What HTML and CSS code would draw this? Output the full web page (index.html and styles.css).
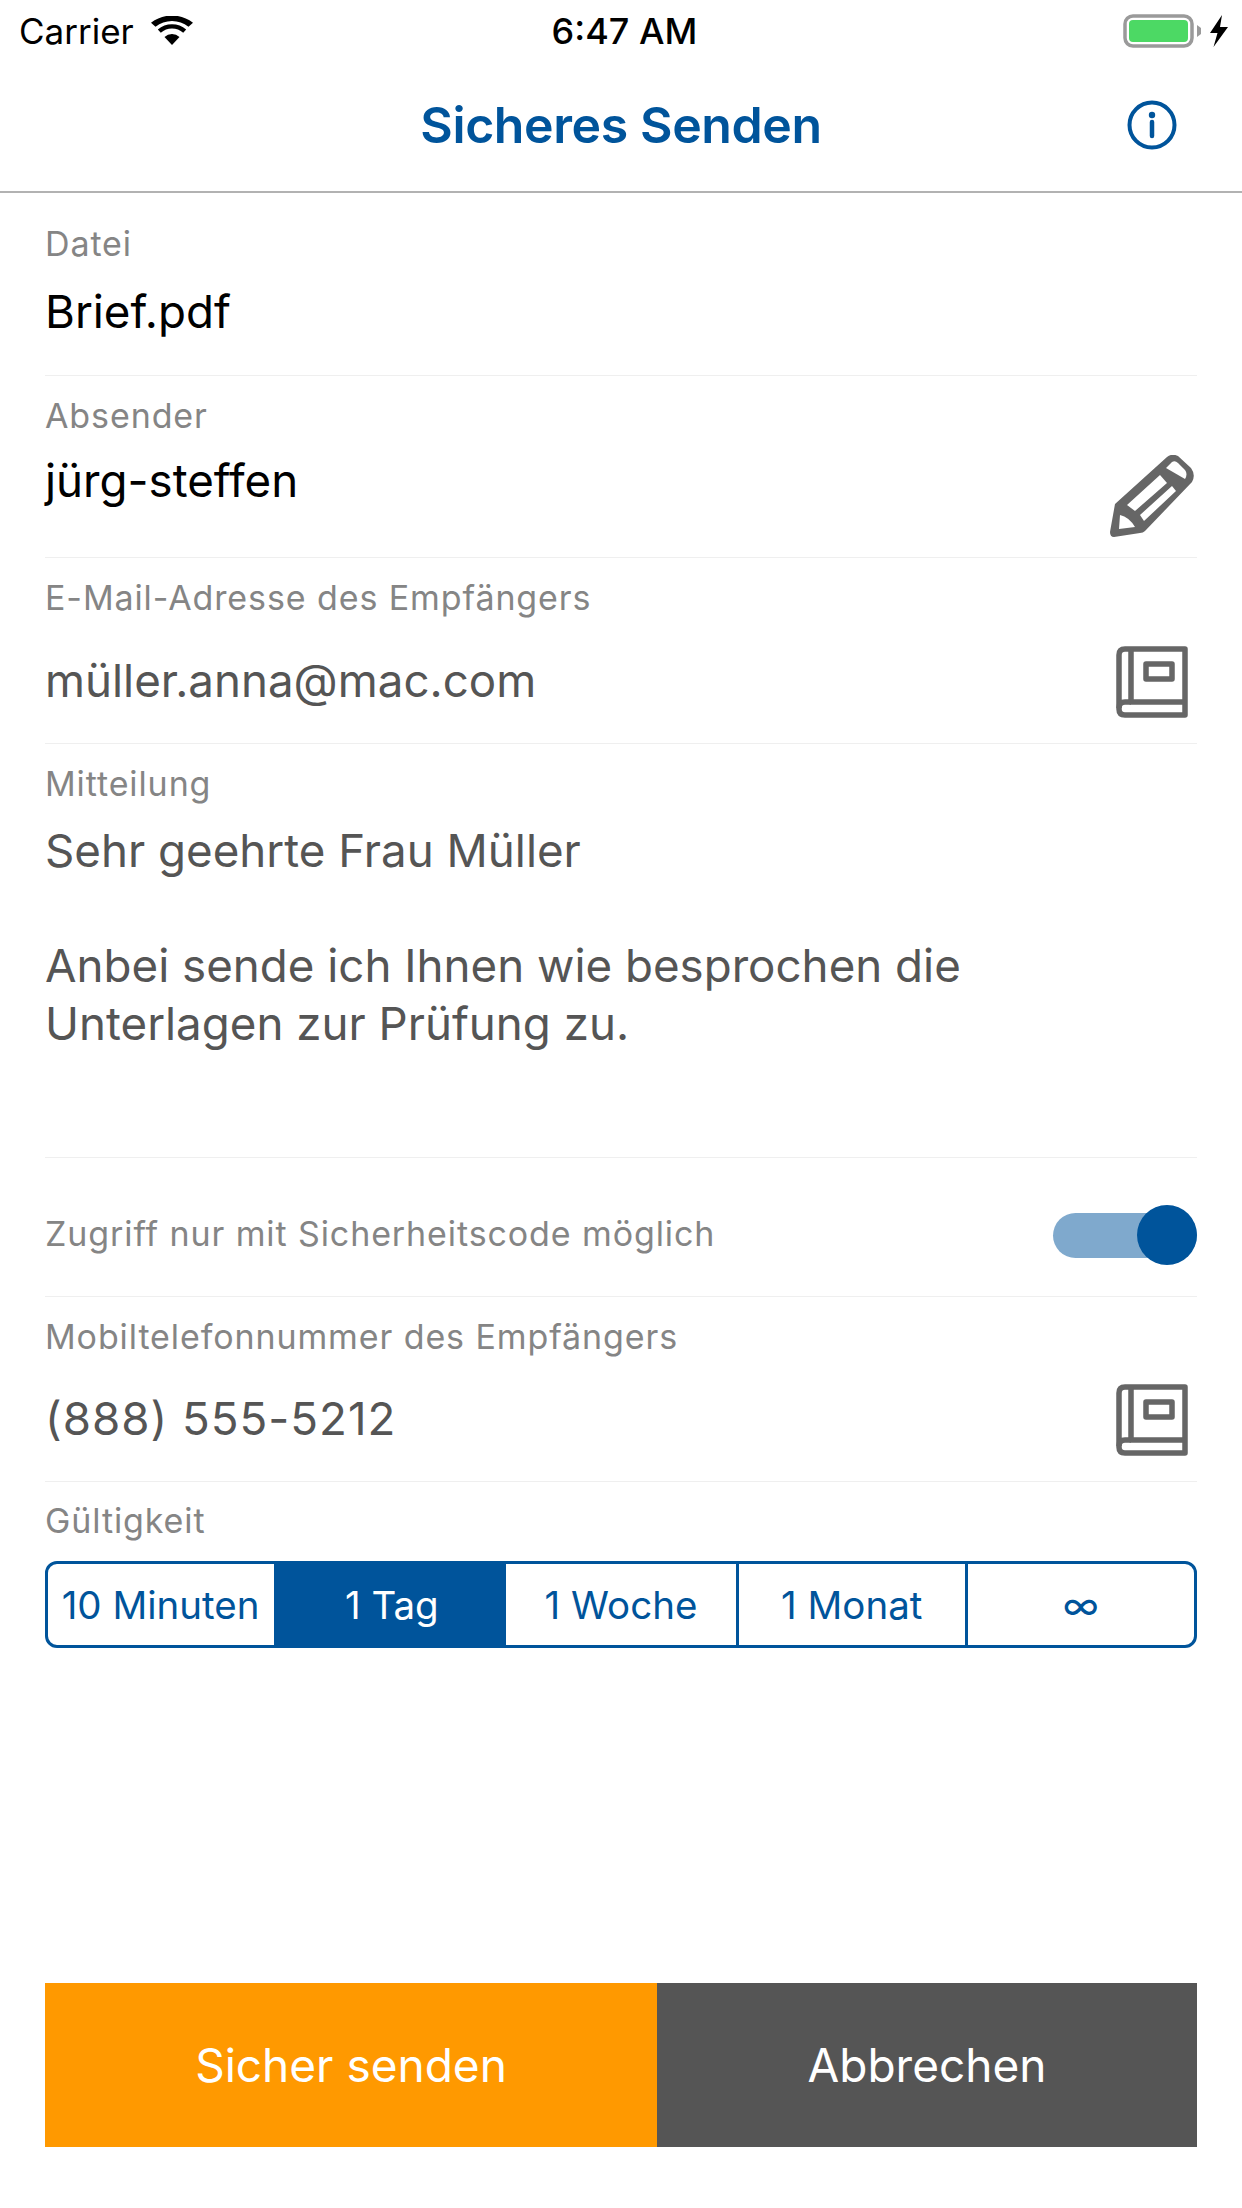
FILE: index.html
```html
<!DOCTYPE html>
<html lang="de">
<head>
<meta charset="utf-8">
<title>Sicheres Senden</title>
<link rel="stylesheet" href="styles.css">
</head>
<body>
<div class="screen">
  <div class="status">
    <div class="status-left">
      <span>Carrier</span>
      <svg class="wifi" viewBox="0 0 42 30"><path d="M21 29 L13.500 21 A11 11 0 0 1 28.500 21Z M21 12.500 A17 17 0 0 0 9.800 16.800 L6.800 13.500 A21.500 21.500 0 0 1 35.200 13.500 L32.200 16.800 A17 17 0 0 0 21 12.500Z M21 5 A28 28 0 0 0 4.500 10.800 L0 6.800 A34 34 0 0 1 42 6.800 L37.500 10.800 A28 28 0 0 0 21 5Z" fill="#000"/></svg>
    </div>
    <div class="status-time">6:47 AM</div>
    <div class="status-right">
      <svg class="battery" viewBox="0 0 78 34"><rect x="2" y="2" width="67" height="30" rx="8" fill="none" stroke="#9a9a9a" stroke-width="3.500"/><rect x="6" y="6" width="59" height="22" rx="4" fill="#4cd964"/><path d="M74 11 L78 14 V20 L74 23Z" fill="#9a9a9a"/></svg>
      <svg class="bolt" viewBox="0 0 18 32"><path d="M12 0 L0 18 H7.500 L3.500 32 L18 12 H10Z" fill="#000"/></svg>
    </div>
  </div>
  <header class="nav">
    <h1 class="nav-title">Sicheres Senden</h1>
    <svg class="info" viewBox="0 0 50 50"><circle cx="25" cy="25" r="22.500" fill="none" stroke="#00549b" stroke-width="4"/><circle cx="25" cy="15" r="3.200" fill="#00549b"/><path d="M25 22 V36" fill="none" stroke="#00549b" stroke-width="4.500" stroke-linecap="round"/></svg>
  </header>
  <main class="form">
    <section class="row row-file">
      <div class="label">Datei</div>
      <div class="value dark">Brief.pdf</div>
    </section>
    <section class="row row-sender has-icon">
      <div>
        <div class="label">Absender</div>
        <div class="value dark">jürg-steffen</div>
      </div>
      <svg class="pencil" viewBox="0 0 84 82"><path fill="#666" fill-rule="evenodd" d="M5 49 L57 2 Q62 -2 68 1 L81 13 Q86 20 82 27 L35 76 Q33 78 30 78 L4 82 Q0 82 0 77 Z M17 50 L50 20 L57 28 L25 56 Z M30 60 L62 31 L66 36 L34 66 Z M56 13 L62 7 Q65 5 68 8 L75 15 Q78 19 75 24 Z M10 60 Q19 62 25 72 L9 74 Z"/></svg>
    </section>
    <section class="row row-mail has-icon">
      <div>
        <div class="label">E-Mail-Adresse des Empfängers</div>
        <div class="value">müller.anna@mac.com</div>
      </div>
      <svg class="book" viewBox="0 0 72 72"><g fill="none" stroke="#666" stroke-width="5.500" stroke-linejoin="round"><path d="M69 3 H9 Q3 3 3 9 V63 Q3 69 9 69 H69 Z"/><path d="M15 3 V56 H69"/><path d="M3 62 Q3 56 9 56 H15"/><rect x="30" y="18" width="26" height="15"/></g></svg>
    </section>
    <section class="row row-message">
      <div class="label">Mitteilung</div>
      <div class="value message">Sehr geehrte Frau Müller<br><br>Anbei sende ich Ihnen wie besprochen die<br>Unterlagen zur Prüfung zu.</div>
    </section>
    <section class="row row-toggle">
      <div class="label">Zugriff nur mit Sicherheitscode möglich</div>
      <div class="toggle"><span class="knob"></span></div>
    </section>
    <section class="row row-phone has-icon">
      <div>
        <div class="label">Mobiltelefonnummer des Empfängers</div>
        <div class="value phone">(888) 555-5212</div>
      </div>
      <svg class="book" viewBox="0 0 72 72"><g fill="none" stroke="#666" stroke-width="5.500" stroke-linejoin="round"><path d="M69 3 H9 Q3 3 3 9 V63 Q3 69 9 69 H69 Z"/><path d="M15 3 V56 H69"/><path d="M3 62 Q3 56 9 56 H15"/><rect x="30" y="18" width="26" height="15"/></g></svg>
    </section>
    <section class="validity">
      <div class="label">Gültigkeit</div>
      <div class="segments">
        <div class="segment">10 Minuten</div>
        <div class="segment selected">1 Tag</div>
        <div class="segment">1 Woche</div>
        <div class="segment">1 Monat</div>
        <div class="segment">∞</div>
      </div>
    </section>
  </main>
  <div class="actions">
    <div class="btn primary">Sicher senden</div>
    <div class="btn secondary">Abbrechen</div>
  </div>
</div>
</body>
</html>
```
FILE: styles.css
```css
* { box-sizing: border-box; }
html, body { margin: 0; padding: 0; background: #fff; }
.screen { width: 1242px; height: 2208px; display: flex; flex-direction: column; font-family: Inter, sans-serif; overflow: hidden; }
.status { height: 60px; padding: 1px 14px 0 19px; display: grid; grid-template-columns: 1fr auto 1fr; align-items: center; font-size: 35px; color: #000; }
.status-left { display: flex; align-items: center; gap: 17px; }
.wifi { width: 42px; height: 30px; }
.status-time { margin-left: 2px; font-size: 36px; font-weight: 500; }
.status-right { display: flex; justify-content: flex-end; align-items: center; gap: 9px; }
.battery { width: 78px; height: 34px; }
.bolt { width: 18px; height: 32px; }
.nav { height: 133px; position: relative; display: flex; justify-content: center; align-items: center; border-bottom: 2px solid #b2b2b2; }
.nav-title { margin: 0 0 2px; font-weight: 600; font-size: 50px; letter-spacing: -0.4px; color: #00549b; }
.info { position: absolute; right: 65px; top: 40px; width: 50px; height: 50px; }
.form { margin: 0 45px; flex: 1; }
.row { border-bottom: 1px solid #efefef; padding-top: 20px; }
.has-icon { display: flex; justify-content: space-between; }
.label { font-size: 34px; letter-spacing: 0.9px; line-height: 40px; color: #858585; }
.value { font-size: 45.7px; line-height: 57.5px; color: #555; }
.dark { color: #000; }
.phone { letter-spacing: 1px; }
.row-file { height: 183px; padding-top: 31px; }
.row-file .value { margin-top: 19px; }
.row-sender { height: 182px; }
.row-sender .value { margin-top: 16px; }
.row-mail { height: 186px; }
.row-mail .value { margin-top: 34px; }
.row-message { height: 414px; }
.row-message .value { margin-top: 18px; }
.row-toggle { height: 139px; padding-top: 14px; display: flex; justify-content: space-between; align-items: center; }
.row-phone { height: 185px; }
.row-phone .value { margin-top: 33px; }
.pencil { width: 84px; height: 82px; margin: 59px 3px 0 0; }
.book { width: 72px; height: 72px; margin: 67px 9px 0 0; }
.row-mail .book { margin-top: 68px; }
.toggle { position: relative; width: 144px; height: 45px; margin-top: 2px; border-radius: 23px; background: #7fa9cd; }
.knob { position: absolute; right: 0; top: -8px; width: 60px; height: 60px; border-radius: 50%; background: #00549b; }
.validity { padding-top: 19px; }
.segments { display: grid; grid-template-columns: repeat(5, 1fr); height: 87px; margin-top: 20px; border: 3px solid #00549b; border-radius: 12px; overflow: hidden; }
.segment { display: flex; align-items: center; justify-content: center; font-size: 38.5px; color: #00549b; border-left: 3px solid #00549b; }
.segment:first-child { border-left: 0; padding-right: 4px; }
.selected { background: #00549b; color: #fff; margin-left: -3px; }
.selected + .segment { border-left: 0; }
.actions { display: flex; margin: 0 45px 61px; height: 164px; }
.btn { display: flex; align-items: center; justify-content: center; font-size: 46px; color: #fff; }
.primary { width: 612px; background: #ff9900; }
.secondary { flex: 1; background: #555; }
```
